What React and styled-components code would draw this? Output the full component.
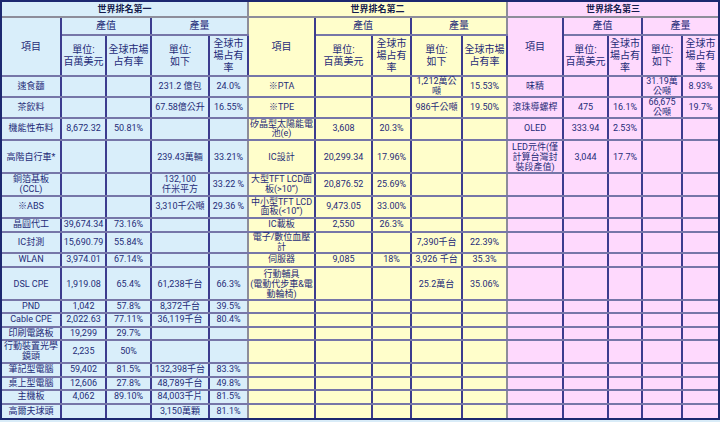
import React from 'react';
import styled, { createGlobalStyle } from 'styled-components';

const GlobalStyle = createGlobalStyle`
  html, body {
    margin: 0;
    padding: 0;
  }
  body {
    background: #d9ecf8;
    font-family: Roboto, "Noto Sans CJK TC", sans-serif;
  }
`;

const tones = {
  blue: '#d9eefa',
  yellow: '#fffecb',
  pink: '#fed9fd',
};

const NAVY = '#3c3c8e';
const GREY = '#8d8d9a';
const ROWLINE = '#7676a8';

const Frame = styled.div`
  width: fit-content;
  border: 2px solid #1c2870;
`;

const Table = styled.table`
  border-collapse: collapse;
  border-style: hidden;
  table-layout: fixed;
  width: 716px;
  color: #1f2c78;
`;

const Row = styled.tr`
  height: ${(p) => p.$h}px;
`;

const Cell = styled.td`
  background: ${(p) => tones[p.$tone]};
  border-left: 2px solid ${NAVY};
  border-right: 2px solid ${(p) => (p.$end ? GREY : NAVY)};
  border-top: 2px solid ${ROWLINE};
  border-bottom: 2px solid ${ROWLINE};
  padding: 0;
  text-align: center;
  vertical-align: middle;
  line-height: ${(p) => (p.$head ? '12px' : p.$tall ? '10px' : '9.5px')};
  font-size: ${(p) => (p.$head ? '10px' : '9px')};
  white-space: pre;
  overflow: visible;
`;

const TitleCell = styled(Cell)`
  font-weight: 700;
  color: #151c4c;
  line-height: 12px;
  border-bottom-color: ${GREY};
`;

const widths = [59, 45, 45, 58, 39, 67, 57, 39, 51, 45, 56, 45, 34, 40, 36];

const sections = [
  {
    tone: 'blue',
    title: '世界排名第一',
    share1: '全球市場\n占有率',
    share2: '全球市\n場占有\n率',
  },
  {
    tone: 'yellow',
    title: '世界排名第二',
    share1: '全球市\n場占有\n率',
    share2: '全球市場\n占有率',
  },
  {
    tone: 'pink',
    title: '世界排名第三',
    share1: '全球市\n場占有\n率',
    share2: '全球市\n場占有\n率',
  },
];

const blank = ['', '', '', '', ''];

// 每列：高度 + 三個區塊各五欄
const rows = [
  [21, ['速食麵', '', '', '231.2 億包', '24.0%'], ['※PTA', '', '', '1,212萬公\n噸', '15.53%'], ['味精', '', '', '31.19萬\n公噸', '8.93%']],
  [21, ['茶飲料', '', '', '67.58億公升', '16.55%'], ['※TPE', '', '', '986千公噸', '19.50%'], ['滾珠導螺桿', '475', '16.1%', '66,675\n公噸', '19.7%']],
  [22, ['機能性布料', '8,672.32', '50.81%', '', ''], ['矽晶型太陽能電\n池(e)', '3,608', '20.3%', '', ''], ['OLED', '333.94', '2.53%', '', '']],
  [33, ['高階自行車*', '', '', '239.43萬輛', '33.21%'], ['IC設計', '20,299.34', '17.96%', '', ''], ['LED元件(僅\n計算台灣封\n裝段產值)', '3,044', '17.7%', '', '']],
  [23, ['銅箔基板\n(CCL)', '', '', '132,100\n仟米平方', '33.22 %'], ['大型TFT LCD面\n板(>10”)', '20,876.52', '25.69%', '', ''], blank],
  [22, ['※ABS', '', '', '3,310千公噸', '29.36 %'], ['中小型TFT LCD\n面板(<10”)', '9,473.05', '33.00%', '', ''], blank],
  [14, ['晶圓代工', '39,674.34', '73.16%', '', ''], ['IC載板', '2,550', '26.3%', '', ''], blank],
  [21, ['IC封測', '15,690.79', '55.84%', '', ''], ['電子/數位血壓\n計', '', '', '7,390千台', '22.39%'], blank],
  [14, ['WLAN', '3,974.01', '67.14%', '', ''], ['伺服器', '9,085', '18%', '3,926 千台', '35.3%'], blank],
  [33, ['DSL CPE', '1,919.08', '65.4%', '61,238千台', '66.3%'], ['行動輔具\n(電動代步車&電\n動輪椅)', '', '', '25.2萬台', '35.06%'], blank],
  [13, ['PND', '1,042', '57.8%', '8,372千台', '39.5%'], blank, blank],
  [14, ['Cable CPE', '2,022.63', '77.11%', '36,119千台', '80.4%'], blank, blank],
  [13, ['印刷電路板', '19,299', '29.7%', '', ''], blank, blank],
  [23, ['行動裝置光學\n鏡頭', '2,235', '50%', '', ''], blank, blank],
  [14, ['筆記型電腦', '59,402', '81.5%', '132,398千台', '83.3%'], blank, blank],
  [13, ['桌上型電腦', '12,606', '27.8%', '48,789千台', '49.8%'], blank, blank],
  [14, ['主機板', '4,062', '89.10%', '84,003千片', '81.5%'], blank, blank],
  [14, ['高爾夫球頭', '', '', '3,150萬顆', '81.1%'], blank, blank],
];

export default function App() {
  return (
    <>
      <GlobalStyle />
      <Frame>
        <Table>
          <colgroup>
            {widths.map((w, i) => (
              <col key={i} style={{ width: w }} />
            ))}
          </colgroup>
          <thead>
            <Row $h={15}>
              {sections.map((s) => (
                <TitleCell key={s.title} colSpan={5} $tone={s.tone} $end>
                  {s.title}
                </TitleCell>
              ))}
            </Row>
            <Row $h={18}>
              {sections.map((s) => (
                <React.Fragment key={s.title}>
                  <Cell rowSpan={2} $tone={s.tone} $head>項目</Cell>
                  <Cell colSpan={2} $tone={s.tone} $head>產值</Cell>
                  <Cell colSpan={2} $tone={s.tone} $head $end>產量</Cell>
                </React.Fragment>
              ))}
            </Row>
            <Row $h={41}>
              {sections.map((s) => (
                <React.Fragment key={s.title}>
                  <Cell $tone={s.tone} $head>{'單位:\n百萬美元'}</Cell>
                  <Cell $tone={s.tone} $head>{s.share1}</Cell>
                  <Cell $tone={s.tone} $head>{'單位:\n如下'}</Cell>
                  <Cell $tone={s.tone} $head $end>{s.share2}</Cell>
                </React.Fragment>
              ))}
            </Row>
          </thead>
          <tbody>
            {rows.map(([h, ...blocks], r) => (
              <Row key={r} $h={h}>
                {blocks.map((cells, b) =>
                  cells.map((text, c) => (
                    <Cell
                      key={`${b}-${c}`}
                      $tone={sections[b].tone}
                      $end={c === 4}
                      $tall={h > 30}
                    >
                      {text}
                    </Cell>
                  ))
                )}
              </Row>
            ))}
          </tbody>
        </Table>
      </Frame>
    </>
  );
}
